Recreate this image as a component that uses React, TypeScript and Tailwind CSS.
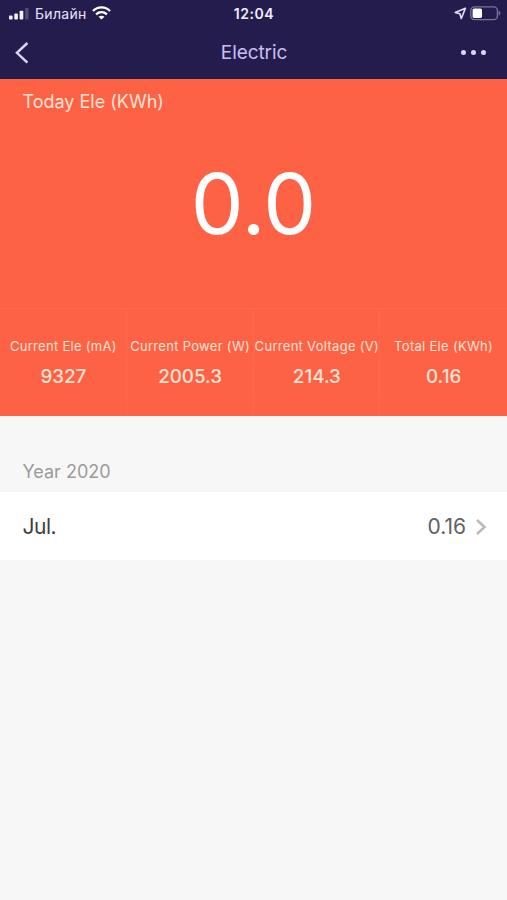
const stats = [
  { label: 'Current Ele (mA)', value: '9327' },
  { label: 'Current Power (W)', value: '2005.3' },
  { label: 'Current Voltage (V)', value: '214.3' },
  { label: 'Total Ele (KWh)', value: '0.16' },
];

function StatusBar() {
  return (
    <div className="grid h-[27px] grid-cols-3 items-center text-[#e9e3fa]">
      <div className="flex items-center pl-[9px]">
        <svg className="shrink-0" width="21" height="12" viewBox="0 0 21 12" fill="#f5f2ff">
          <rect x="0" y="7.5" width="3.6" height="4" rx="0.9" />
          <rect x="5.3" y="5.5" width="3.6" height="6" rx="0.9" />
          <rect x="10.6" y="2.7" width="3.7" height="8.8" rx="0.9" />
          <rect x="16" y="0" width="3.7" height="11.5" rx="0.9" fill="#514879" />
        </svg>
        <span className="ml-[5px] text-[14px] leading-[18px] tracking-[0.32px] whitespace-nowrap">Билайн</span>
        <svg className="mb-px ml-[5px] shrink-0" width="19" height="14" viewBox="0 0 19 14" fill="none" stroke="#fff">
          <path d="M1 5C5.8.2 13.2.2 18 5" strokeWidth="2.4" />
          <path d="M4.1 8.3c3.1-2.9 7.7-2.9 10.8 0" strokeWidth="2.3" />
          <path d="M9.5 13.6 6.5 10.7c1.7-1.4 4.3-1.4 6 0z" fill="#fff" stroke="none" />
        </svg>
      </div>
      <div className="pl-px text-center text-[14px] leading-[18px] font-semibold tracking-[0.55px] text-[#f2eeff]">12:04</div>
      <div className="flex items-center justify-end pr-[5px]">
        <svg width="13" height="13" viewBox="0 0 13 13" fill="none" stroke="#e6dffa" strokeWidth="1.6" strokeLinejoin="round">
          <path d="M11.4 1.3 1.2 5.4l4.7 1.3 1.4 4.8z" />
        </svg>
        <svg className="ml-[3px]" width="32" height="15" viewBox="0 0 32 15">
          <rect x="0.8" y="0.8" width="26.6" height="12.8" rx="3.6" fill="none" stroke="#7a719d" strokeWidth="1.3" />
          <rect x="2.6" y="2.5" width="9.4" height="9.4" rx="1.6" fill="#fff" />
          <path d="M28.6 4.8c2.3.7 2.3 4.1 0 4.8z" fill="#7a719d" />
        </svg>
      </div>
    </div>
  );
}

function NavBar() {
  return (
    <div className="grid h-[52px] grid-cols-3 items-center text-[#c9bfee]">
      <svg className="mb-px ml-[14px]" width="16" height="24" viewBox="0 0 16 24" fill="none" stroke="#dcd5f6" strokeWidth="2.4">
        <path d="M13.4 2 2.9 11.8 13.4 21.6" />
      </svg>
      <h1 className="pl-px text-center text-[19px] leading-6 tracking-[-0.1px]">Electric</h1>
      <div className="flex justify-end gap-[5px] pr-[21.5px] pb-[2px]">
        <i className="size-[5px] rounded-full bg-[#dcd5f6]" />
        <i className="size-[5px] rounded-full bg-[#dcd5f6]" />
        <i className="size-[5px] rounded-full bg-[#dcd5f6]" />
      </div>
    </div>
  );
}

export default function App() {
  return (
    <main className="flex h-[900px] w-[507px] flex-col overflow-hidden bg-[#f7f7f7] font-['Inter','Liberation_Sans',sans-serif]">
      <header className="bg-[#251c4e]">
        <StatusBar />
        <NavBar />
      </header>
      <section className="flex h-[337px] flex-col bg-[#fd6244] text-[#ffe3d7]">
        <h2 className="mt-[11px] pl-[22.5px] text-[18px] leading-6">Today Ele (KWh)</h2>
        <div className="mt-[40px] text-center text-[84px] leading-[100px] font-normal tracking-[-0.2px] text-white">0.0</div>
        <div className="mt-auto grid h-[108px] grid-cols-4 border-t border-[#fb6d50]">
          {stats.map((s) => (
            <div key={s.label} className="flex flex-col items-center border-r border-[#fb6a4d] pt-[28px] pl-px last:border-r-0 last:pl-0">
              <span className="text-[13px] leading-[18px] tracking-[0.3px] whitespace-nowrap">{s.label}</span>
              <span className="mt-[10px] text-[18.8px] leading-6 font-medium">{s.value}</span>
            </div>
          ))}
        </div>
      </section>
      <h3 className="flex h-[76px] items-end pb-[8px] pl-[22.5px] text-[18px] leading-6 text-[#9b9b9b]">Year 2020</h3>
      <div className="flex h-[68px] items-center bg-white pt-[2px] pr-[20px] pl-[22.5px] text-[21px] leading-7">
        <span className="tracking-[-0.5px] text-[#3d3d3d]">Jul.</span>
        <span className="ml-auto text-[#616161]">0.16</span>
        <svg className="ml-[9px]" width="12" height="18" viewBox="0 0 12 18" fill="none" stroke="#b9b9b9" strokeWidth="2.4">
          <path d="M2 2 9.6 9 2 16" />
        </svg>
      </div>
    </main>
  );
}
